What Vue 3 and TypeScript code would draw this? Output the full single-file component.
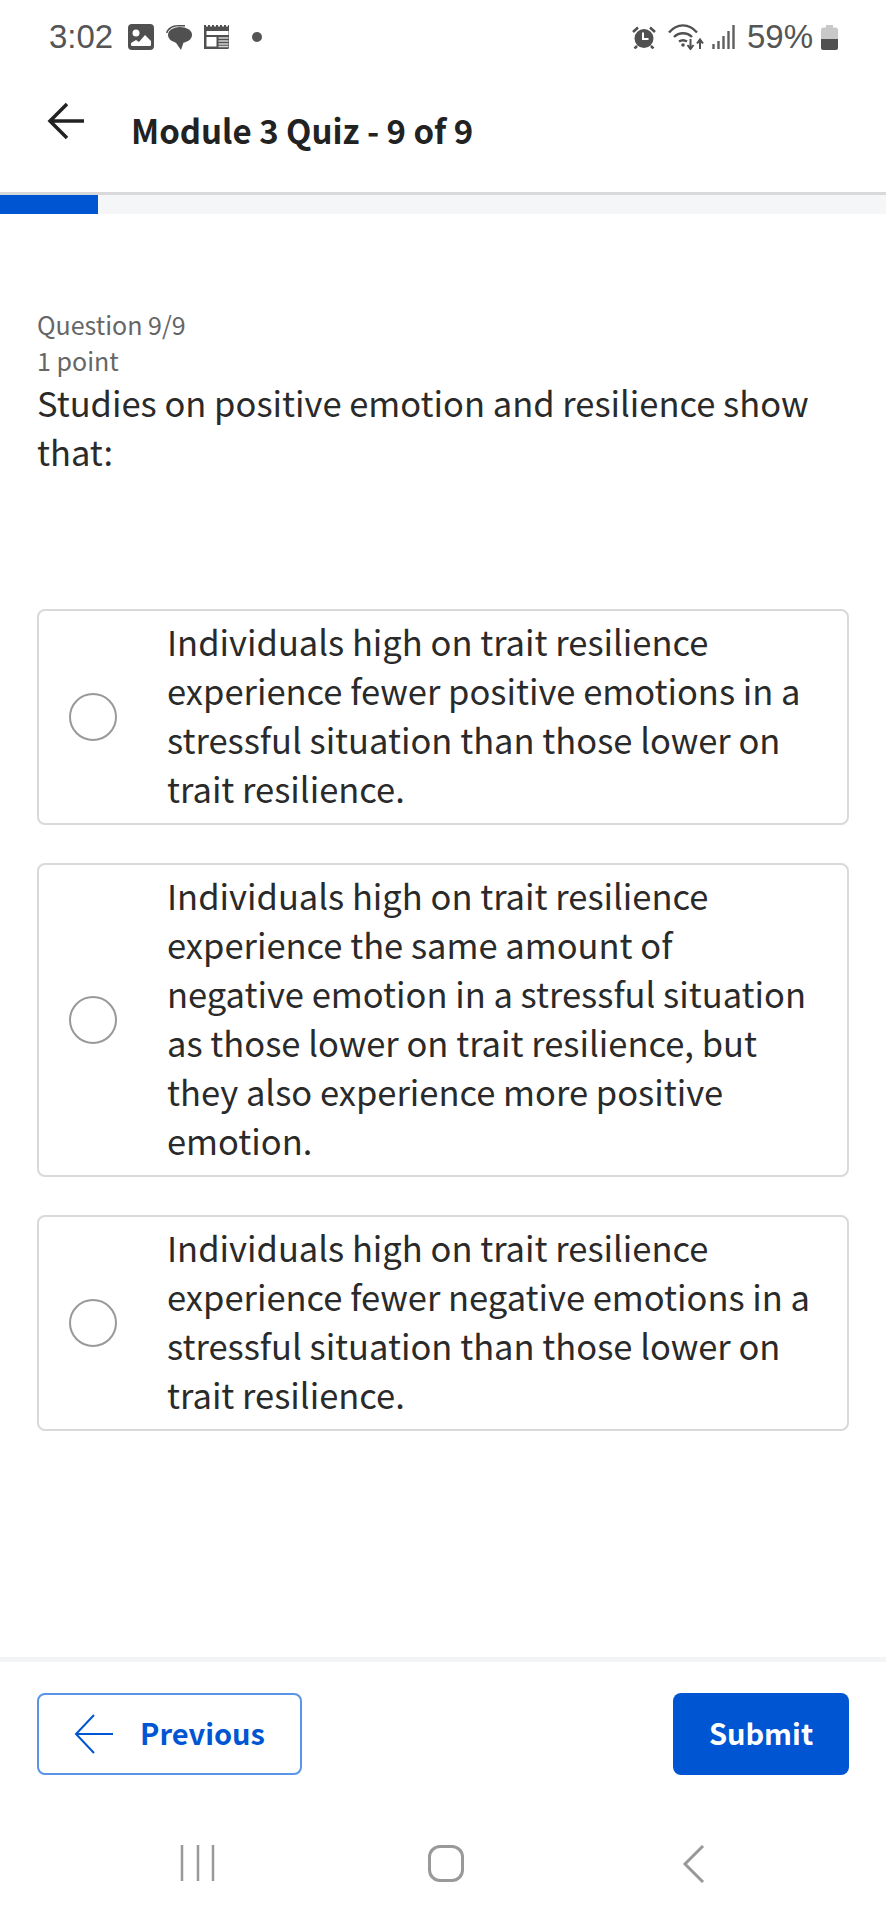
<template>
  <div class="screen">
    <div class="status">
      <span class="time">3:02</span>
      <svg class="ic-photo" width="26" height="26" viewBox="0 0 26 26">
        <rect width="26" height="26" rx="4" fill="#505050" />
        <circle cx="8" cy="9" r="3.500" fill="#fff" />
        <path d="M3 22v-3l5 -3 3 2 6-7 6 6v4a1 1 0 0 1-1 1H4a1 1 0 0 1-1-1z" fill="#fff" />
      </svg>
      <svg class="ic-bubble" width="26" height="25" viewBox="0 0 26 25">
        <path d="M0 8C1 3 6 0 12 0h7v1.500h-7C7 1.500 3 4 1.500 8z" fill="#505050" />
        <ellipse cx="14" cy="10" rx="12" ry="8" fill="#505050" />
        <path d="M8 15l7 10 3-9z" fill="#505050" />
      </svg>
      <svg class="ic-news" width="27" height="24" viewBox="0 0 27 24">
        <path d="M0 0h2v1.500h2V0h2v1.500h2V0h2v1.500h2V0h2v1.500h2V0h2v1.500h2V0h2v1.500h2V0h1v22.500a1.500 1.500 0 0 1-1.500 1.500h-24A1.500 1.500 0 0 1 0 22.500z" fill="#505050" />
        <rect x="2.500" y="6" width="22" height="4" fill="#fff" />
        <rect x="2.500" y="12" width="10" height="9.500" fill="#fff" />
        <path d="M14.500 13h10M14.500 16h10M14.500 19h10M14.500 21.500h10" stroke="#d5d5d5" stroke-width="1.300" />
      </svg>
      <span class="dot" />
      <span class="status-right">
        <svg width="24" height="23" viewBox="0 0 24 23">
          <circle cx="12" cy="12.500" r="9.500" fill="#505050" />
          <path d="M11 6.500v6.500h5.500" stroke="#fff" stroke-width="2" fill="none" />
          <path d="M1 6l5-4.500M23 6l-5-4.500M5 20l-2.500 2.500M19 20l2.500 2.500" stroke="#505050" stroke-width="2.500" />
        </svg>
        <svg class="ic-wifi" width="36" height="26" viewBox="0 0 36 26">
          <path d="M1 8.500c8-9.500 20-9.500 28 0M6 13c5-5 13-5 18 0M11 17.500c3-2 5-2 8 0" stroke="#505050" stroke-width="2.400" fill="none" />
          <circle cx="15" cy="21" r="1.800" fill="#505050" />
          <path d="M22.500 15v9M19.500 21l3 4 3-4M32 25V16M29 19.500l3-4 3 4" stroke="#505050" stroke-width="2" fill="none" />
        </svg>
        <svg class="ic-signal" width="23" height="24" viewBox="0 0 23 24">
          <path d="M1.500 19v5M6.500 16v8M11.500 11v13M16.500 6v18M21.500 0v24" stroke="#606060" stroke-width="2.400" />
        </svg>
        <span class="pct">59%</span>
        <svg class="ic-battery" width="17" height="25" viewBox="0 0 17 25">
          <path d="M5 0h7v2.500h2.500A2.500 2.500 0 0 1 17 5v17.500a2.500 2.500 0 0 1-2.500 2.500h-12A2.500 2.500 0 0 1 0 22.500V5a2.500 2.500 0 0 1 2.500-2.500H5z" fill="#c8c8c8" />
          <path d="M0 14h17v8.500a2.500 2.500 0 0 1-2.500 2.500h-12A2.500 2.500 0 0 1 0 22.500z" fill="#505050" />
        </svg>
      </span>
    </div>

    <header class="header">
      <svg class="back" width="38" height="38" viewBox="0 0 38 38">
        <path d="M37 19H3M20 2L3 19l17 17" stroke="#222" stroke-width="3.500" fill="none" />
      </svg>
      <h1 class="title">Module 3 Quiz - 9 of 9</h1>
    </header>

    <div class="progress"><div class="progress-fill" /></div>

    <main class="content">
      <div class="meta">Question 9/9</div>
      <div class="meta">1 point</div>
      <p class="question">Studies on positive emotion and resilience show that:</p>

      <div class="options">
        <label v-for="(opt, i) in options" :key="i" class="option">
          <span class="radio" />
          <span class="option-text">{{ opt }}</span>
        </label>
      </div>
    </main>

    <footer class="footer">
      <button class="btn btn-prev">
        <svg width="40" height="40" viewBox="0 0 40 40">
          <path d="M39 20H2M20 1L2 20l18 19" stroke="#0056d2" stroke-width="2" fill="none" />
        </svg>
        <span class="btn-label">Previous</span>
      </button>
      <button class="btn btn-submit"><span class="btn-label">Submit</span></button>
    </footer>

    <nav class="softkeys">
      <svg width="36" height="36" viewBox="0 0 36 36">
        <path d="M2 0v36M18 0v36M33 0v36" stroke="#999" stroke-width="2.500" />
      </svg>
      <span class="home" />
      <svg width="24" height="38" viewBox="0 0 24 38">
        <path d="M21 1L3 19l18 18" stroke="#999" stroke-width="3" fill="none" />
      </svg>
    </nav>
  </div>
</template>

<script setup lang="ts">
const options: string[] = [
  'Individuals high on trait resilience experience fewer positive emotions in a stressful situation than those lower on trait resilience.',
  'Individuals high on trait resilience experience the same amount of negative emotion in a stressful situation as those lower on trait resilience, but they also experience more positive emotion.',
  'Individuals high on trait resilience experience fewer negative emotions in a stressful situation than those lower on trait resilience.',
]
</script>

<style>
html,
body {
  margin: 0;
  background: #fff;
}
</style>

<style scoped>
.screen {
  width: 886px;
  height: 1920px;
  overflow: hidden;
  display: flex;
  flex-direction: column;
  font-family: "Noto Sans CJK SC", "Noto Sans", sans-serif;
  color: #2a2a2a;
  background: #fff;
}

.status {
  height: 74px;
  box-sizing: border-box;
  padding: 0 48px 0 49px;
  display: flex;
  align-items: center;
  color: #555;
  font-family: "Liberation Sans", Arial, sans-serif;
}

.time {
  font-size: 33px;
}

.status svg {
  flex: none;
}

.ic-photo {
  margin-left: 15px;
}

.ic-bubble,
.ic-news {
  margin-left: 12px;
}

.dot {
  width: 10px;
  height: 10px;
  margin-left: 21px;
  border-radius: 50%;
  background: #555;
}

.status-right {
  margin-left: auto;
  display: flex;
  align-items: center;
}

.ic-wifi {
  margin-left: 12px;
}

.ic-signal {
  margin-left: 8px;
}

.pct {
  font-size: 33px;
  margin-left: 12px;
}

.ic-battery {
  margin-left: 8px;
}

.header {
  height: 118px;
  display: flex;
  align-items: center;
  padding-left: 47px;
}

.back {
  margin-bottom: 24px;
}

.title {
  margin: 0 0 6px 46px;
  font-size: 33px;
  line-height: 40px;
  font-weight: 700;
  color: #222;
}

.progress {
  height: 19px;
  background: #f5f6f8;
  border-top: 3px solid #d9d9d9;
}

.progress-fill {
  width: 98px;
  height: 19px;
  background: #0056d2;
}

.content {
  flex: 1;
  padding: 92px 37px 0;
}

.meta {
  font-size: 25px;
  line-height: 36px;
  color: #666;
}

.question {
  margin: 0;
  font-size: 34.500px;
  line-height: 49px;
  color: #2a2a2a;
}

.options {
  margin-top: 133px;
  display: flex;
  flex-direction: column;
  gap: 38px;
}

.option {
  display: flex;
  align-items: center;
  padding: 6px 30px 10px;
  border: 2px solid #d9d9d9;
  border-radius: 8px;
}

.radio {
  flex: none;
  box-sizing: border-box;
  width: 48px;
  height: 48px;
  margin-top: 4px;
  border: 2px solid #999;
  border-radius: 50%;
}

.option-text {
  margin-left: 50px;
  font-size: 34.500px;
  line-height: 49px;
}

.footer {
  height: 133px;
  box-sizing: border-box;
  padding: 31px 37px 0;
  display: flex;
  justify-content: space-between;
  align-items: flex-start;
  border-top: 5px solid #f3f4f5;
}

.btn {
  height: 82px;
  box-sizing: border-box;
  border-radius: 8px;
  font-family: inherit;
  font-size: 29px;
  font-weight: 700;
  display: flex;
  align-items: center;
  justify-content: center;
}

.btn-label {
  margin-bottom: 4px;
}

.btn-prev {
  width: 265px;
  gap: 26px;
  background: #fff;
  color: #0056d2;
  border: 2.500px solid #5a94e6;
}

.btn-submit {
  width: 176px;
  background: #0056d2;
  color: #fff;
  border: 0;
}

.softkeys {
  height: 130px;
  box-sizing: border-box;
  padding: 55px 180px 0;
  display: flex;
  align-items: flex-start;
  justify-content: space-between;
}

.home {
  width: 36px;
  height: 37px;
  margin-left: -6px;
  box-sizing: border-box;
  border: 3px solid #999;
  border-radius: 12px;
}
</style>
